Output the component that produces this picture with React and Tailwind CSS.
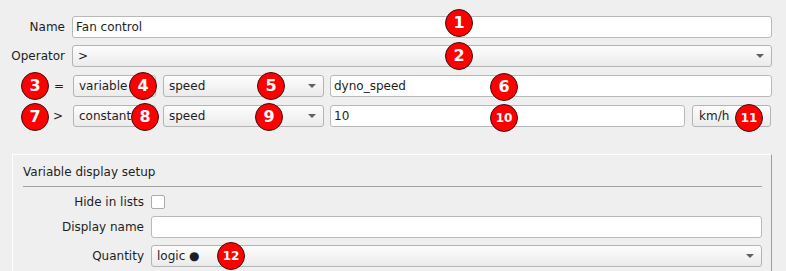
import React from "react";

function Badge({ n, cx, cy }) {
  const small = n >= 10;
  return (
    <div
      className={`absolute flex items-center justify-center w-[28px] h-[28px] rounded-full bg-[#ff0000] border border-[#3a1010] text-white font-bold ${small ? "text-[12px]" : "text-[16px]"}`}
      style={{ left: cx - 14, top: cy - 14 }}
    >
      {n}
    </div>
  );
}

function Arrow() {
  return (
    <div className="w-0 h-0 border-l-[4px] border-r-[4px] border-t-[4px] border-l-transparent border-r-transparent border-t-[#606060]" />
  );
}

function Input({ value, className = "" }) {
  return (
    <div className={`h-[22px] bg-white border border-[#b9b9b9] rounded-[3px] flex items-center pl-[3px] ${className}`}>
      {value}
    </div>
  );
}

function Combo({ value, className = "", arrow = true }) {
  return (
    <div className={`h-[22px] bg-linear-to-b from-[#fdfdfd] to-[#ebebeb] border border-[#b4b4b4] rounded-[3px] flex items-center pl-[5px] pr-[7px] ${className}`}>
      <span className="flex-1 whitespace-nowrap overflow-hidden">{value}</span>
      {arrow && <Arrow />}
    </div>
  );
}

export default function App() {
  return (
    <div className="relative w-[786px] h-[271px] overflow-hidden bg-[#efefef] font-['DejaVu_Sans',sans-serif] text-[12px] leading-[14px] text-[#1e1e1e]">
      <div className="pt-[16px] pr-[14px] flex flex-col">
        <div className="flex items-center gap-[7px]">
          <div className="w-[65px] text-right">Name</div>
          <Input value="Fan control" className="flex-1" />
        </div>
        <div className="flex items-center gap-[7px] mt-[7px]">
          <div className="w-[65px] text-right">Operator</div>
          <Combo value=">" className="flex-1" />
        </div>
        <div className="flex items-center mt-[8px]">
          <div className="w-[64px] text-right">=</div>
          <Combo value="variable" arrow={false} className="w-[83px] ml-[9px]" />
          <Combo value="speed" className="w-[161px] ml-[7px]" />
          <Input value="dyno_speed" className="flex-1 ml-[6px]" />
        </div>
        <div className="flex items-center mt-[8px]">
          <div className="w-[63px] text-right">&gt;</div>
          <Combo value="constant" arrow={false} className="w-[83px] ml-[10px]" />
          <Combo value="speed" className="w-[161px] ml-[7px]" />
          <Input value="10" className="flex-1 ml-[6px]" />
          <Combo value="km/h" arrow={false} className="w-[79px] ml-[7px] mr-[1px] pl-[6px]" />
        </div>
      </div>

      <div className="ml-[12px] mt-[27px] w-[760px] h-[200px] border-t border-l border-t-white border-l-white border-r border-r-[#9d9d9d] pl-[10px] pr-[9px] pt-[10px]">
        <div className="h-[14px]">Variable display setup</div>
        <div className="mt-[7px] h-[1px] bg-[#a2a2a2]" />
        <div className="flex items-center gap-[7px] mt-[8px]">
          <div className="w-[121px] text-right">Hide in lists</div>
          <div className="w-[14px] h-[14px] bg-white border border-[#ababab] rounded-[2px]" />
        </div>
        <div className="flex items-center gap-[7px] mt-[7px]">
          <div className="w-[121px] text-right">Display name</div>
          <Input value="" className="flex-1" />
        </div>
        <div className="flex items-center gap-[7px] mt-[7px]">
          <div className="w-[121px] text-right">Quantity</div>
          <Combo value="logic ●" className="flex-1" />
        </div>
      </div>

      <Badge n={1} cx={459} cy={23} />
      <Badge n={2} cx={459} cy={56} />
      <Badge n={3} cx={35} cy={86} />
      <Badge n={4} cx={143} cy={86} />
      <Badge n={5} cx={271} cy={86} />
      <Badge n={6} cx={504} cy={87} />
      <Badge n={7} cx={35} cy={117} />
      <Badge n={8} cx={145} cy={117} />
      <Badge n={9} cx={269} cy={117} />
      <Badge n={10} cx={504} cy={118} />
      <Badge n={11} cx={749} cy={118} />
      <Badge n={12} cx={231} cy={256} />
    </div>
  );
}
